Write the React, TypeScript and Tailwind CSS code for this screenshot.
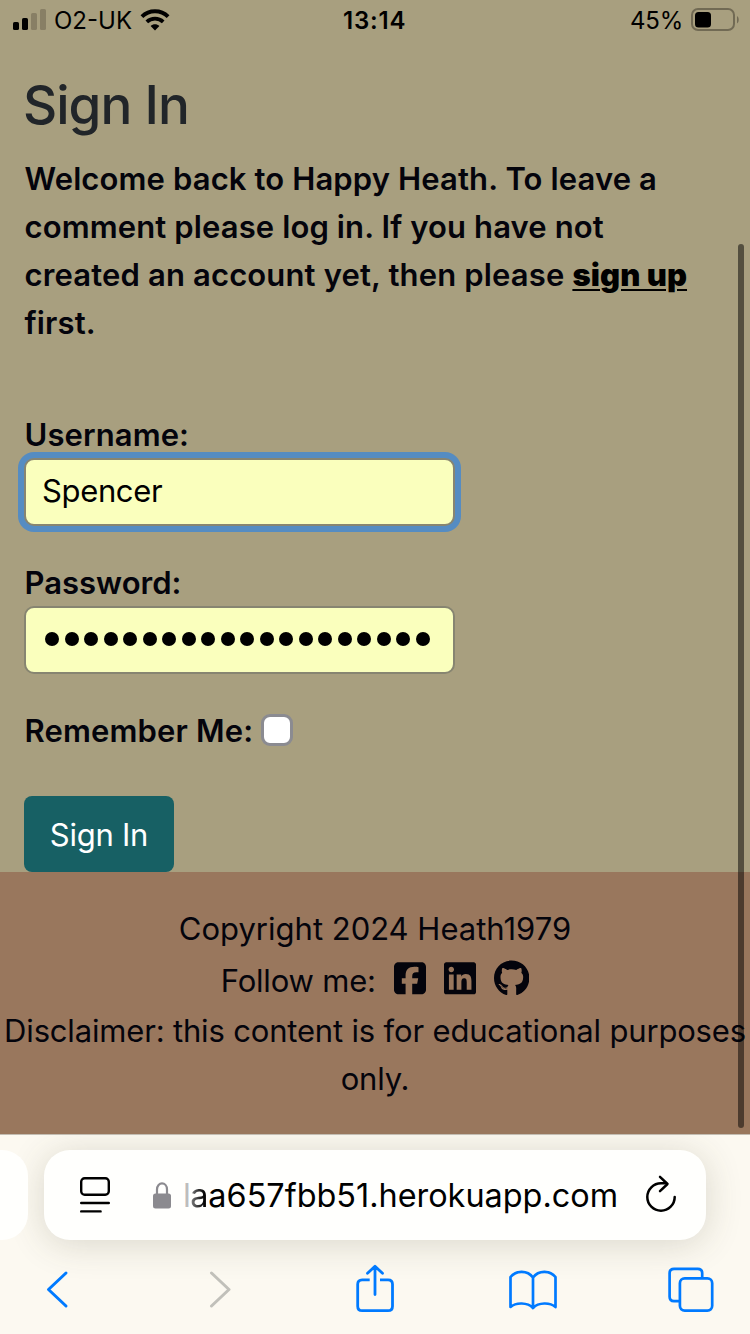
import React from 'react';
import { FaGithub, FaLinkedin, FaSquareFacebook } from 'react-icons/fa6';

function StatusBar() {
  return (
    <header className="flex h-[40px] shrink-0 items-center text-black">
      <svg className="ml-[13px] w-[33px]" height="22" viewBox="0 0 33 22">
        <rect x="0" y="13" width="6" height="8" rx="1.6" />
        <rect x="9" y="9" width="6" height="12" rx="1.6" />
        <rect x="18" y="4" width="6" height="17" rx="1.6" fill="#887f65" />
        <rect x="27" y="0" width="6" height="21" rx="1.6" fill="#887f65" />
      </svg>
      <span className="ml-[8px] w-[86px] pt-[2px] text-[24px] whitespace-nowrap">O2-UK</span>
      <svg className="h-[22px] w-[30px]" viewBox="0 0 30 22" fill="none" stroke="black">
        <path d="M1.9 7.6C9.2.6 20.8.6 28.1 7.6" strokeWidth="4" />
        <path d="M6.8 12.8C11.4 8.5 18.6 8.5 23.2 12.8" strokeWidth="3.8" />
        <path d="M15 21.5 10.6 17C13 14.8 17 14.8 19.4 17Z" fill="black" stroke="none" />
      </svg>
      <span className="ml-[173px] w-[63px] pt-[2px] text-[24px] font-semibold tracking-[0.8px] whitespace-nowrap">13:14</span>
      <span className="ml-[224px] w-[60px] pt-[2px] text-[24px] tracking-[-0.2px] whitespace-nowrap">45%</span>
      <svg width="49" height="24" viewBox="0 0 49 24">
        <rect x="2" y="1" width="42" height="21" rx="6" fill="none" stroke="#716a54" strokeWidth="2" />
        <rect x="5" y="4" width="16" height="15.5" rx="3.5" />
        <path d="M47 8c2.3 1.5 2.3 6 0 7.5Z" fill="#716a54" />
      </svg>
    </header>
  );
}

function Page() {
  return (
    <main className="flex h-[832px] shrink-0 flex-col items-start pl-6 text-[31px] leading-[48px] font-semibold text-[#04040c]">
      <h1 className="-ml-px mt-[32px] text-[53px] leading-[66px] font-medium tracking-[-1px] text-[#212529]">Sign In</h1>
      <p className="mt-[17px] ml-[0.5px] tracking-[0.12px] whitespace-nowrap">
        <span className="block">Welcome back to Happy Heath. To leave a</span>
        <span className="block">comment please log in. If you have not</span>
        <span className="block tracking-[0.15px]">
          created an account yet, then please{' '}
          <a className="font-black tracking-[0.1px] text-black underline decoration-[2px] underline-offset-[3px]">sign up</a>
        </span>
        <span className="block">first.</span>
      </p>
      <label className="mt-[64px] ml-[0.5px] tracking-[0.1px]">Username:</label>
      <div className="-mt-px flex h-[68px] w-[431px] items-center rounded-[10px] border-2 border-[#878571] bg-[#faffbd] pl-4 font-normal text-black shadow-[0_0_0_6px_#558cc2]">
        <span className="-mt-[2px] tracking-[-0.35px]">Spencer</span>
      </div>
      <label className="mt-[33px] ml-[0.5px]">Password:</label>
      <div className="-mt-px flex h-[68px] w-[431px] items-center gap-[5.53px] rounded-[10px] border-2 border-[#878571] bg-[#faffbd] pl-[19px]">
        {Array.from({ length: 20 }, (_, i) => (
          <span key={i} className="-mt-[3px] size-[14px] shrink-0 rounded-full bg-black" />
        ))}
      </div>
      <div className="mt-[33px] flex h-[48px] items-center">
        <label className="w-[237px] pl-[0.5px] tracking-[0.15px] whitespace-nowrap">Remember Me:</label>
        <span className="-mt-[2px] size-[32px] rounded-[9px] border-[3px] border-[#8b8b91] bg-white" />
      </div>
      <button className="mt-[41px] h-[76px] w-[150px] rounded-[8px] bg-[#176064] pt-[1px] font-normal tracking-[-0.25px] text-white">
        Sign In
      </button>
    </main>
  );
}

function Footer() {
  return (
    <footer className="flex h-[262px] shrink-0 flex-col items-center bg-[#99775d] pt-[33px] text-[31px] leading-[48px] whitespace-nowrap text-[#04040c]">
      <p>Copyright 2024 Heath1979</p>
      <div className="mt-[4px] flex h-[48px] items-center">
        <span className="w-[173px] tracking-[-0.2px]">Follow me:</span>
        <FaSquareFacebook className="-mt-[5px] h-[36.57px] w-[32px]" />
        <FaLinkedin className="-mt-[5px] ml-[18px] h-[36.57px] w-[32px]" />
        <FaGithub className="-mt-[5px] ml-[18px] h-[36.57px] w-[35.4px]" />
      </div>
      <p className="mt-[2px] tracking-[-0.17px]">Disclaimer: this content is for educational purposes</p>
      <p className="tracking-[-0.17px]">only.</p>
    </footer>
  );
}

function BrowserBar() {
  return (
    <nav className="flex h-[200px] shrink-0 flex-col overflow-hidden border-t border-[#c3bdb2] bg-[#fcf9f1]">
      <div className="mt-[15px] flex h-[90px] shrink-0 gap-4">
        <div className="relative z-10 h-full w-[28px] rounded-r-[26px] bg-[#fffffd]" />
        <div className="flex h-full w-[662px] items-center rounded-[26px] bg-[#fffffd] shadow-[0_4px_36px_rgba(70,70,40,0.19)]">
          <svg className="ml-[36px]" width="30" height="36" viewBox="0 0 30 36" fill="none" stroke="black" strokeWidth="2.4" strokeLinecap="round">
            <rect x="1.2" y="1.2" width="27.6" height="16.6" rx="3.5" />
            <path d="M1.2 26h27.6M1.2 34.4h19.4" />
          </svg>
          <svg className="ml-[43px]" width="18" height="27" viewBox="0 0 18 27">
            <path d="M4 13V7.5C4 -.7 14 -.7 14 7.5V13" fill="none" stroke="#8b8a8f" strokeWidth="2.2" />
            <rect y="11.5" width="18" height="15" rx="2.5" fill="#8b8a8f" />
          </svg>
          <span className="ml-[12px] w-[462px] pt-[2px] text-[32.4px] whitespace-nowrap">
            <span className="tracking-[-0.7px] text-[#bdbdbd]">l</span>
            <span className="bg-linear-to-r from-[#888] to-black bg-clip-text text-transparent">a</span>
            <span className="text-black">a657fbb51.herokuapp.com</span>
          </span>
          <svg className="-mt-[2px]" width="32" height="38" viewBox="0 0 32 38" fill="none" stroke="black" strokeWidth="2.5" strokeLinecap="round" strokeLinejoin="round">
            <path d="M21 8.3H16A13.7 13.7 0 1 0 29.7 22" />
            <path d="M15 1.8 22.5 9 15 16.2" />
          </svg>
        </div>
      </div>
      <div className="flex h-[94px] shrink-0 pt-[24px] text-[#007aff]">
        <svg className="ml-[46px]" width="23" height="50" viewBox="0 0 23 50" fill="none" stroke="currentColor" strokeWidth="3" strokeLinecap="round" strokeLinejoin="round">
          <path d="M20 9 2.5 25.5 20 42" />
        </svg>
        <svg className="ml-[139px]" width="23" height="50" viewBox="0 0 23 50" fill="none" stroke="#c1c0ba" strokeWidth="3" strokeLinecap="round" strokeLinejoin="round">
          <path d="M3.5 9 21 25.5 3.5 42" />
        </svg>
        <svg className="ml-[124px]" width="40" height="50" viewBox="0 0 40 50" fill="none" stroke="currentColor" strokeWidth="2.8" strokeLinejoin="round">
          <path d="M14.7 15.8H7.2Q2.7 15.8 2.7 20.3V42.2Q2.7 46.7 7.2 46.7H33Q37.5 46.7 37.5 42.2V20.3Q37.5 15.8 33 15.8H25" />
          <path d="M20 30.5V2.5M12.5 9.3 20 2.3 27.5 9.3" strokeLinecap="round" />
        </svg>
        <svg className="ml-[113.5px]" width="48" height="50" viewBox="0 0 48 50" fill="none" stroke="currentColor" strokeWidth="2.7" strokeLinejoin="round">
          <path d="M24 13.5C18.5 6 7 6 1.5 13V43C7 38.2 18.5 38.2 24 44C29.5 38.2 41 38.2 46.5 43V13C41 6 29.5 6 24 13.5V44" />
        </svg>
        <svg className="ml-[111px]" width="46" height="50" viewBox="0 0 46 50" fill="none" stroke="currentColor" strokeWidth="2.7">
          <path d="M34.2 14V9.2Q34.2 4.8 29.8 4.8H6Q1.6 4.8 1.6 9.2V32.8Q1.6 37.2 6 37.2H12" />
          <rect x="11.9" y="14.4" width="32.3" height="32.2" rx="4.8" />
        </svg>
      </div>
    </nav>
  );
}

export default function App() {
  return (
    <div className="relative flex h-[1334px] w-[750px] flex-col overflow-hidden bg-[#a89f7f] font-['Inter','Liberation_Sans',sans-serif]">
      <StatusBar />
      <Page />
      <Footer />
      <BrowserBar />
      <div className="absolute top-[244px] left-[738px] h-[884px] w-[6px] rounded-full bg-black/50" />
    </div>
  );
}
